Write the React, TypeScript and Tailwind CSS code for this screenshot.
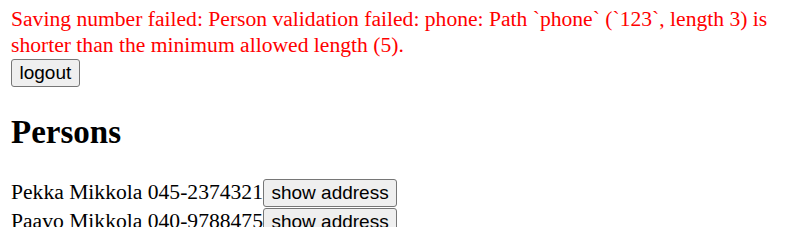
const persons = [
  { name: "Pekka Mikkola", phone: "045-2374321" },
  { name: "Paavo Mikkola", phone: "040-9788475" },
];

function Notify({ errorMessage }: { errorMessage: string | null }) {
  if (!errorMessage) return null;
  return <div className="text-[#ff0000] leading-[26.3px]">{errorMessage}</div>;
}

function Button({ children }: { children: React.ReactNode }) {
  return (
    <button className="h-[28px] px-[7.5px] border border-[#767676] rounded-[3px] bg-[#efefef] font-['Liberation_Sans',Arial,sans-serif] text-[19px] leading-[22px] text-black">
      {children}
    </button>
  );
}

export default function App() {
  return (
    <div className="min-h-[227px] bg-white px-[11px] pt-[6px] font-['Liberation_Serif','Times_New_Roman',serif] text-[21.6px] text-black">
      <Notify errorMessage="Saving number failed: Person validation failed: phone: Path `phone` (`123`, length 3) is shorter than the minimum allowed length (5)." />
      <div className="flex">
        <Button>logout</Button>
      </div>
      <h2 className="mt-[26px] mb-[28px] text-[33px] leading-[38px] font-bold">Persons</h2>
      {persons.map((p) => (
        <div key={p.name} className="flex items-baseline h-[29px]">
          <span className="leading-[25px]">
            {p.name} {p.phone}
          </span>
          <Button>show address</Button>
        </div>
      ))}
    </div>
  );
}
